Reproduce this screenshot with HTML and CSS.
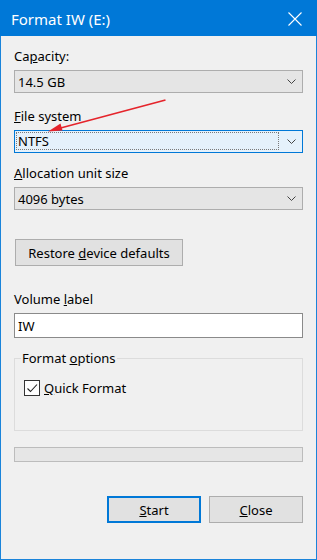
FILE: index.html
```html
<!DOCTYPE html>
<html>
<head>
<meta charset="utf-8">
<link rel="stylesheet" href="styles.css">
</head>
<body>
<div class="window">
  <div class="titlebar">
    <span class="title">Format IW (E:)</span>
    <svg class="close" width="14" height="14" viewBox="0 0 14 14"><path d="M0.5 0.5L13.5 13.5M13.5 0.5L0.5 13.5" stroke="#fff" stroke-width="1.1" fill="none"/></svg>
  </div>
  <div class="content">
    <div class="label">Ca<u>p</u>acity:</div>
    <div class="combo">
      <span class="value">14.5 GB</span>
      <span class="chev"><svg width="9" height="5" viewBox="0 0 9 5"><path d="M0.5 0.5L4.5 4.5L8.5 0.5" stroke="#444" stroke-width="1" fill="none"/></svg></span>
    </div>

    <div class="label gap-fs"><u>F</u>ile system</div>
    <div class="combo focused">
      <span class="value focusrect">NTFS</span>
      <span class="chev"><svg width="9" height="5" viewBox="0 0 9 5"><path d="M0.5 0.5L4.5 4.5L8.5 0.5" stroke="#444" stroke-width="1" fill="none"/></svg></span>
    </div>

    <div class="label gap-al"><u>A</u>llocation unit size</div>
    <div class="combo">
      <span class="value">4096 bytes</span>
      <span class="chev"><svg width="9" height="5" viewBox="0 0 9 5"><path d="M0.5 0.5L4.5 4.5L8.5 0.5" stroke="#444" stroke-width="1" fill="none"/></svg></span>
    </div>

    <div class="btn restore"><span>Restore <u>d</u>evice defaults</span></div>

    <div class="label gap-vl">Volume <u>l</u>abel</div>
    <div class="textbox">IW</div>

    <fieldset class="group">
      <legend>Format <u>o</u>ptions</legend>
      <div class="checkrow">
        <span class="checkbox"><svg width="14" height="14" viewBox="0 0 14 14"><path d="M2.5 7.5L5.5 10.5L12 3.5" stroke="#222" stroke-width="1.1" fill="none"/></svg></span>
        <span><u>Q</u>uick Format</span>
      </div>
    </fieldset>

    <div class="progress"></div>

    <div class="actions">
      <div class="btn action default"><span><u>S</u>tart</span></div>
      <div class="btn action"><span><u>C</u>lose</span></div>
    </div>
  </div>

  <svg class="arrow" width="130" height="40" viewBox="0 0 130 40">
    <path d="M124.5 5L14 34.5" stroke="#e5242b" stroke-width="1.7" fill="none"/>
    <path d="M7 36.5L19.5 28.5L21.5 35.5Z" fill="#e5242b"/>
  </svg>
</div>
</body>
</html>
```

FILE: styles.css
```css
* { box-sizing: border-box; }
html, body { margin: 0; padding: 0; }
body {
  font-family: "Noto Sans", "Open Sans", sans-serif;
  font-size: 13px;
  color: #000;
  background: #f0f0f0;
}
.window {
  position: relative;
  width: 317px;
  height: 560px;
  background: #f0f0f0;
  border: 1px solid #1a84da;
  border-top: none;
  display: flex;
  flex-direction: column;
}
.titlebar {
  height: 36px;
  margin: 0 -1px;
  background: #0078d7;
  color: #fff;
  display: flex;
  align-items: center;
  padding: 0 15px 0 11px;
}
.title {
  font-size: 15px;
  flex: 1;
  padding-top: 1px;
}
.close { display: block; margin-top: 1px; }
.content {
  padding: 12px 13px 0 13px;
  display: flex;
  flex-direction: column;
}
.label {
  line-height: 16px;
  height: 16px;
  margin-bottom: 6px;
  white-space: nowrap;
}
.gap-fs { margin-top: 15px; }
.gap-al { margin-top: 12px; }
.gap-vl { margin-top: 25px; }
.combo {
  height: 23px;
  border: 1px solid #adadad;
  background: #e5e5e5;
  display: flex;
  align-items: stretch;
}
.combo .value {
  flex: 1;
  padding-left: 3px;
  display: flex;
  align-items: center;
}
.combo .chev {
  width: 23px;
  display: flex;
  align-items: center;
  justify-content: center;
  padding-left: 1px;
}
.combo .chev svg { display: block; }
.combo.focused {
  background: #e5f1fb;
  border-color: #0078d7;
}
.combo .focusrect {
  margin: 1px 0 2px 1px;
  border: 1px dotted #7a7a7a;
  padding-left: 1px;
}
.btn {
  height: 27px;
  border: 1px solid #adadad;
  background: #e1e1e1;
  display: flex;
  align-items: center;
  justify-content: center;
  white-space: nowrap;
}
.restore {
  margin-top: 29px;
  margin-left: 1px;
  width: 168px;
}
.textbox {
  height: 25px;
  border: 1px solid #8a8a8a;
  background: #fff;
  padding-left: 3px;
  display: flex;
  align-items: center;
}
.group {
  margin: 12px 0 0 0;
  padding: 0 8px 33px 8px;
  border: 1px solid #dcdcdc;
  min-width: 0;
}
.group legend {
  padding: 0 1px;
  margin-left: -2px;
  line-height: 16px;
}
.checkrow {
  margin-top: 13px;
  display: flex;
  align-items: center;
  gap: 4px;
  margin-left: 1px;
}
.checkbox {
  width: 16px;
  height: 16px;
  border: 1px solid #333;
  background: #fff;
  display: flex;
  align-items: center;
  justify-content: center;
}
.checkbox svg { display: block; }
.progress {
  margin-top: 16px;
  height: 15px;
  border: 1px solid #bcbcbc;
  background: #e6e6e6;
}
.actions {
  margin-top: 34px;
  display: flex;
  justify-content: flex-end;
  gap: 8px;
}
.action {
  width: 94px;
  height: 27px;
}
.default {
  border-color: #0078d7;
  box-shadow: inset 0 0 0 1px #0078d7;
}
.arrow {
  position: absolute;
  left: 40px;
  top: 95px;
  display: block;
}
```
